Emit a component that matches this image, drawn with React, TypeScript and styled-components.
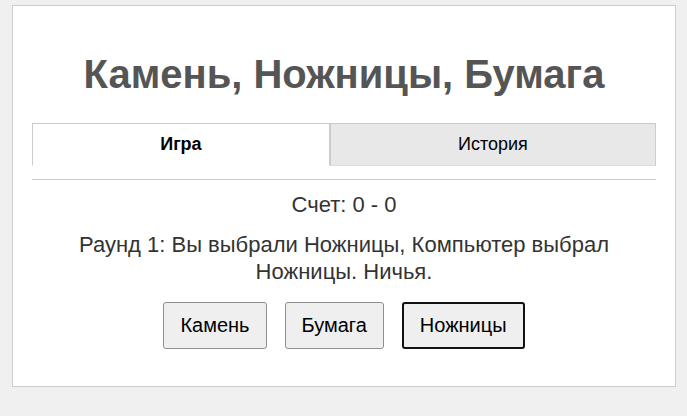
import React, { useState } from "react";
import styled, { createGlobalStyle } from "styled-components";

const GlobalStyle = createGlobalStyle`
  body {
    margin: 0;
    background: #f0f0f0;
    font-family: "Liberation Sans", Arial, sans-serif;
  }
`;

const StyledContainer = styled.div`
  box-sizing: border-box;
  width: 664px;
  margin: 5px 0 0 12px;
  padding: 0 19px 37px;
  background: #ffffff;
  border: 1px solid #cccccc;
  text-align: center;
`;

const StyledTitle = styled.h1`
  margin: 0;
  padding: 45px 0 26px;
  font-size: 40px;
  line-height: 46px;
  font-weight: bold;
  color: #555555;
`;

const StyledTabs = styled.div`
  display: flex;
  padding-bottom: 13px;
  border-bottom: 1px solid #cccccc;
`;

const StyledTab = styled.button<{ isActive?: boolean }>`
  flex: 1 1 auto;
  box-sizing: border-box;
  height: 43px;
  padding: 0 12px;
  font-family: inherit;
  font-size: 18px;
  color: #000000;
  font-weight: ${(props) => (props.isActive ? "bold" : "normal")};
  background: ${(props) => (props.isActive ? "#ffffff" : "#e8e8e8")};
  border: 1px solid #cccccc;
  border-bottom-color: ${(props) => (props.isActive ? "#ffffff" : "#dddddd")};
  cursor: pointer;
`;

const StyledScore = styled.p`
  margin: 11px 0 0;
  font-size: 22px;
  line-height: 27px;
  color: #333333;
`;

const StyledResult = styled.p`
  margin: 13px 0 0;
  font-size: 22px;
  line-height: 27px;
  color: #333333;
`;

const StyledChoices = styled.div`
  display: flex;
  justify-content: center;
  gap: 18px;
  margin-top: 17px;
`;

const StyledChoice = styled.button<{ isSelected?: boolean }>`
  box-sizing: border-box;
  height: 47px;
  padding: 0 16px;
  font-family: inherit;
  font-size: 20px;
  color: #000000;
  background: #efefef;
  border: ${(props) =>
    props.isSelected ? "2px solid #111111" : "1px solid #8f8f8f"};
  border-radius: 3px;
  cursor: pointer;
`;

const choices = ["Камень", "Бумага", "Ножницы"];

export default function App() {
  const [tab, setTab] = useState("game");
  const [picked, setPicked] = useState("Ножницы");

  return (
    <>
      <GlobalStyle />
      <StyledContainer>
        <StyledTitle>Камень, Ножницы, Бумага</StyledTitle>
        <StyledTabs>
          <StyledTab isActive={tab === "game"} onClick={() => setTab("game")}>
            Игра
          </StyledTab>
          <StyledTab
            isActive={tab === "history"}
            onClick={() => setTab("history")}
          >
            История
          </StyledTab>
        </StyledTabs>
        <StyledScore>Счет: 0 - 0</StyledScore>
        <StyledResult>
          Раунд 1: Вы выбрали Ножницы, Компьютер выбрал Ножницы. Ничья.
        </StyledResult>
        <StyledChoices>
          {choices.map((choice) => (
            <StyledChoice
              key={choice}
              isSelected={picked === choice}
              onClick={() => setPicked(choice)}
            >
              {choice}
            </StyledChoice>
          ))}
        </StyledChoices>
      </StyledContainer>
    </>
  );
}
